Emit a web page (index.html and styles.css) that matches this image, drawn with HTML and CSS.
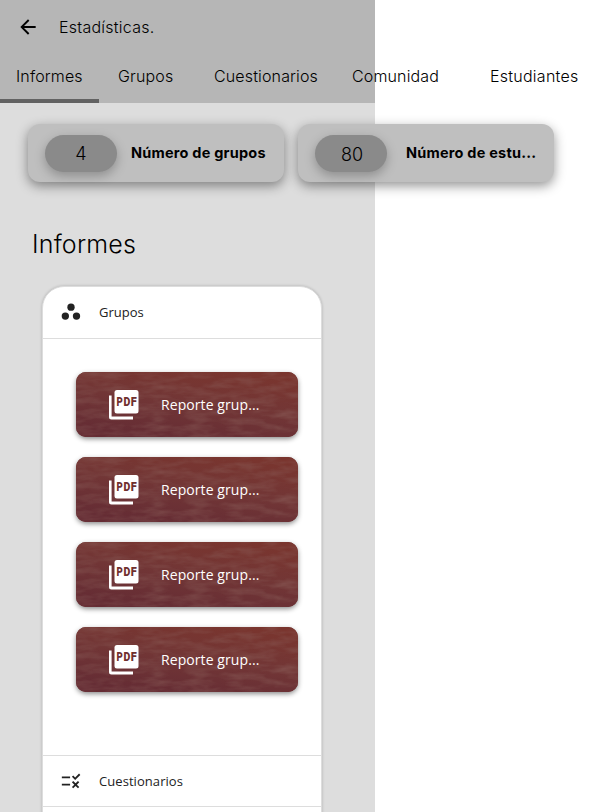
FILE: index.html
```
<!DOCTYPE html>
<html lang="es">
<head>
<meta charset="utf-8">
<title>Estadísticas</title>
<link rel="stylesheet" href="styles.css">
</head>
<body>
<svg class="defs" aria-hidden="true">
  <defs>
    <linearGradient id="tone" x1="0.8" y1="0" x2="0.35" y2="1">
      <stop offset="0" stop-color="#7a352e"/>
      <stop offset="0.5" stop-color="#723636"/>
      <stop offset="1" stop-color="#652c34"/>
    </linearGradient>
    <filter id="clouds" x="0" y="0" width="100%" height="100%" color-interpolation-filters="sRGB">
      <feTurbulence type="fractalNoise" baseFrequency="0.045 0.15" numOctaves="3" seed="8"/>
      <feColorMatrix values="0 0 0 0 0.55  0 0 0 0 0.38  0 0 0 0 0.36  1.8 0 0 0 -0.65"/>
    </filter>
    <symbol id="sky" viewBox="0 0 222 65">
      <rect width="222" height="65" fill="url(#tone)"/>
      <rect width="222" height="65" filter="url(#clouds)" opacity="0.5"/>
    </symbol>
    <symbol id="pdf" viewBox="0 0 30 30">
      <path d="M0 5.5h2.6v21.1h21.4v2.9H2.5a2.5 2.5 0 0 1-2.5-2.5z" fill="#fff"/>
      <rect x="5.5" y="0" width="24" height="23.5" rx="2.5" fill="#fff"/>
      <text x="7.6" y="15.7" textLength="6.3" lengthAdjust="spacingAndGlyphs" class="pdf-label">P</text>
      <text x="14.4" y="15.7" textLength="6.8" lengthAdjust="spacingAndGlyphs" class="pdf-label">D</text>
      <text x="21.7" y="15.7" textLength="6" lengthAdjust="spacingAndGlyphs" class="pdf-label">F</text>
    </symbol>
  </defs>
</svg>
<div class="app">
  <header class="header">
    <div class="title-row">
      <svg class="back" viewBox="0 0 24 24"><path d="M20 11H7.83l5.59-5.59L12 4l-8 8 8 8 1.41-1.41L7.83 13H20v-2z"/></svg>
      <span class="title">Estadísticas.</span>
    </div>
    <nav class="tabs">
      <span class="tab active">Informes</span>
      <span class="tab">Grupos</span>
      <span class="tab">Cuestionarios</span>
      <span class="tab">Comunidad</span>
      <span class="tab">Estudiantes</span>
    </nav>
  </header>
  <section class="stats">
    <div class="stat"><span class="pill">4</span><span class="stat-name">Número de grupos</span></div>
    <div class="stat wide"><span class="pill two">80</span><span class="stat-name">Número de estu...</span></div>
  </section>
  <h1 class="heading">Informes</h1>
  <main class="panel">
    <div class="panel-row">
      <svg class="row-icon" viewBox="0 0 24 24"><circle cx="12" cy="6.2" r="4.4"/><circle cx="5.2" cy="16.9" r="4.4"/><circle cx="18.6" cy="16.9" r="4.4"/></svg>
      <span>Grupos</span>
    </div>
    <div class="reports">
      <div class="report"><svg class="sky"><use href="#sky"/></svg><svg class="pdf"><use href="#pdf"/></svg><span class="report-name">Reporte grup...</span></div>
      <div class="report"><svg class="sky"><use href="#sky"/></svg><svg class="pdf"><use href="#pdf"/></svg><span class="report-name">Reporte grup...</span></div>
      <div class="report"><svg class="sky"><use href="#sky"/></svg><svg class="pdf"><use href="#pdf"/></svg><span class="report-name">Reporte grup...</span></div>
      <div class="report"><svg class="sky"><use href="#sky"/></svg><svg class="pdf"><use href="#pdf"/></svg><span class="report-name">Reporte grup...</span></div>
    </div>
    <div class="panel-row second">
      <svg class="row-icon check" viewBox="0 0 24 24"><path d="M16.54 11L13 7.46l1.41-1.41 2.12 2.12 4.24-4.24 1.41 1.41L16.54 11zM11 7H2v2h9V7zm10 6.41L19.59 12 17 14.59 14.41 12 13 13.41 15.59 16 13 18.59 14.41 20 17 17.41 19.59 20 21 18.59 18.41 16 21 13.41zM11 15H2v2h9v-2z"/></svg>
      <span>Cuestionarios</span>
    </div>
  </main>
</div>
</body>
</html>
```
FILE: styles.css
```
* { box-sizing: border-box; }
html, body { margin: 0; height: 812px; overflow: hidden; background: #fff; }
body { font-family: Inter, sans-serif; font-weight: 300; color: #000; }
.defs { position: absolute; width: 0; height: 0; }
.app { width: 375px; height: 812px; background: #ddd; }
.header { height: 103px; background: #b6b6b6; }
.title-row { display: flex; align-items: center; height: 54px; padding-left: 18px; }
.back { width: 20px; height: 20px; transform: scale(1.15); }
.title { margin-left: 21px; font-size: 16px; letter-spacing: 0.25px; }
.tabs { display: grid; grid-template-columns: 102px 96px 138px 138px 129px; width: 603px; height: 49px; }
.tab { padding: 12px 0 0 16px; font-size: 16px; line-height: 20px; letter-spacing: 0.14px; white-space: nowrap; }
.tab:last-child { letter-spacing: 0.25px; }
.tab.active { width: 99px; border-bottom: 4px solid #626262; }
.stats { display: flex; gap: 14px; width: 603px; padding: 21px 0 0 28px; }
.stat { display: flex; align-items: center; width: 256px; height: 58px; padding-left: 17px; border-radius: 12px; background: #bfbfbf; box-shadow: 0 4px 12px rgba(0,0,0,.42); }
.pill { flex: none; width: 72px; height: 37px; border-radius: 19px; background: #8a8a8a; box-shadow: 0 4px 11px rgba(0,0,0,.26); font-size: 18px; line-height: 38px; text-align: center; }
.pill.two { padding-left: 2px; line-height: 40px; }
.stat-name { margin: 0 0 1px 14px; font-size: 14.5px; font-weight: 700; letter-spacing: 0.22px; white-space: nowrap; }
.wide .stat-name { margin-left: 19px; }
.heading { margin: 46px 0 0 32px; height: 32px; font-size: 25px; line-height: 32px; font-weight: 300; letter-spacing: 0.2px; }
.panel { width: 280px; height: 560px; margin: 26px 0 0 42px; border: 1px solid #ddd; border-radius: 22px 22px 0 0; background: #fff; box-shadow: 0 0 3px rgba(0,0,0,.22); font-family: "Open Sans", "Noto Sans", sans-serif; font-weight: 400; }
.panel-row { display: flex; align-items: center; height: 52px; padding: 0 0 2px 18px; border-bottom: 1px solid #ddd; color: #222; font-size: 13px; }
.panel-row.second { padding-bottom: 0; border-top: 1px solid #ddd; letter-spacing: 0.06px; }
.row-icon { width: 20px; height: 20px; margin-right: 18px; fill: #222; }
.row-icon.check { transform: scale(1.1); }
.reports { display: flex; flex-direction: column; gap: 20px; height: 416px; padding: 33px 0 0 33px; }
.report { position: relative; display: flex; align-items: center; width: 222px; height: 65px; padding-left: 33px; border-radius: 10px; background: #70302f; box-shadow: 0 2px 5px rgba(0,0,0,.45); color: #fff; }
.sky { position: absolute; inset: 0; width: 222px; height: 65px; border-radius: 10px; }
.pdf { position: relative; width: 30px; height: 30px; }
.pdf-label { font: 900 12px "Roboto", sans-serif; fill: #70302f; }
.report-name { position: relative; margin-left: 22px; font-size: 14px; letter-spacing: 0.08px; white-space: nowrap; }
```
